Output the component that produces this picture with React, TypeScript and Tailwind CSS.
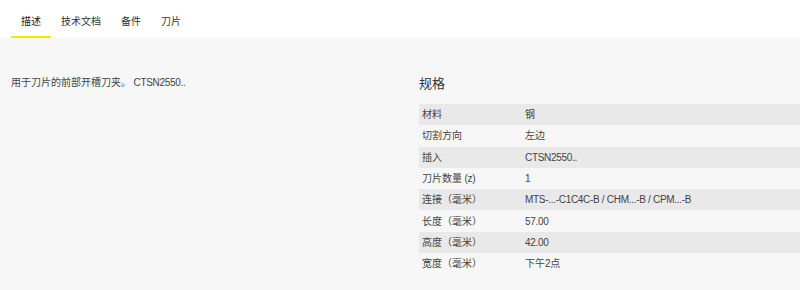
const tabs = ['描述', '技术文档', '备件', '刀片'];

const specs: [string, string][] = [
  ['材料', '钢'],
  ['切割方向', '左边'],
  ['插入', 'CTSN2550..'],
  ['刀片数量 (z)', '1'],
  ['连接（毫米）', 'MTS-...-C1C4C-B / CHM...-B / CPM...-B'],
  ['长度（毫米）', '57.00'],
  ['高度（毫米）', '42.00'],
  ['宽度（毫米）', '下午2点'],
];

// latin runs are set a little tighter than the CJK glyphs in the original
const Mixed = ({ text }: { text: string }) => (
  <>
    {text.split(/([\x20-\x7e]+)/).map((part, i) =>
      /^[\x20-\x7e]+$/.test(part) ? (
        <span key={i} className="tracking-[-0.3px]">
          {part}
        </span>
      ) : (
        part
      )
    )}
  </>
);

export default function App() {
  return (
    <div
      className="w-[800px] h-[290px] overflow-hidden bg-[#f7f7f7] text-[#444]"
      style={{ fontFamily: '"Liberation Sans", "Noto Sans CJK SC", sans-serif' }}
    >
      {/* Tabs */}
      <div className="h-[38px] bg-white flex items-end pl-[11px]">
        {tabs.map((t, i) => (
          <div
            key={t}
            className={`h-[38px] px-[10px] pb-[9px] flex items-end text-[10px] leading-none ${
              i === 0 ? 'border-b-2 border-[#ffe600] text-[#222]' : 'border-b-2 border-transparent text-[#333]'
            }`}
          >
            {t}
          </div>
        ))}
      </div>

      <div className="flex">
        {/* Description */}
        <div className="w-[419px] pl-[11px] pt-[39px] text-[10px] leading-[12px]">
          <Mixed text="用于刀片的前部开槽刀夹。 CTSN2550.." />
        </div>

        {/* Specs */}
        <div className="flex-1 pt-[38px]">
          <h2 className="text-[13px] leading-[16px] text-[#333] mb-[12px]">规格</h2>
          <div className="flex flex-col">
            {specs.map(([k, v], i) => (
              <div
                key={k}
                className={`flex h-[21.3px] items-center text-[10px] ${i % 2 === 0 ? 'bg-[#e9e9e9]' : ''}`}
              >
                <div className="w-[106px] pl-[3px]">
                  <Mixed text={k} />
                </div>
                <div>
                  <Mixed text={v} />
                </div>
              </div>
            ))}
          </div>
        </div>
      </div>
    </div>
  );
}
